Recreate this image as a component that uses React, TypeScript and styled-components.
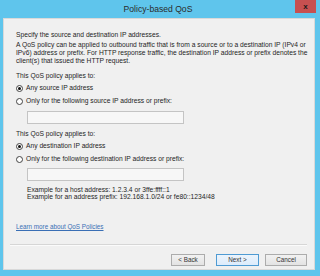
import React from 'react'
import styled, { createGlobalStyle } from 'styled-components'

const GlobalStyle = createGlobalStyle`
  html, body {
    margin: 0;
    padding: 0;
    width: 320px;
    height: 276px;
    overflow: hidden;
    background: #5fc5ec;
  }
  * { box-sizing: border-box; }
`

const Window = styled.div`
  width: 320px;
  height: 276px;
  background: #5fc5ec;
  display: flex;
  flex-direction: column;
  font-family: "Liberation Sans", Arial, sans-serif;
  color: #1e1e1e;
`

const TitleBar = styled.div`
  height: 18px;
  display: grid;
  grid-template-columns: 1fr auto 1fr;
  align-items: start;
`

const Title = styled.div`
  grid-column: 2;
  font-size: 8.6px;
  line-height: 18px;
  color: #2b2b2b;
  margin-right: 4px;
`

const CloseButton = styled.div`
  grid-column: 3;
  justify-self: end;
  width: 21px;
  height: 13px;
  margin-right: 4px;
  background: #c75050;
  display: flex;
  align-items: center;
  justify-content: center;
  font-size: 8px;
  font-weight: bold;
  color: #1a1a1a;
  line-height: 1;
`

const Client = styled.div`
  flex: 1;
  margin: 0 5px 6px 3px;
  background: #f0f0f0;
  border: 1px solid #d9d9d9;
  display: flex;
  flex-direction: column;
`

const Content = styled.div`
  padding: 12px 10px 0 12px;
  font-size: 6.7px;
  line-height: 8px;
`

const Line = styled.div<{ $mt?: number }>`
  margin-top: ${(p) => p.$mt ?? 0}px;
  white-space: nowrap;
`

const Para = styled.p`
  margin: 2px 0 0;
  line-height: 8px;
  white-space: nowrap;
`

const RadioRow = styled.label<{ $mt: number }>`
  display: flex;
  align-items: center;
  gap: 3px;
  height: 8px;
  margin-top: ${(p) => p.$mt}px;
`

const RadioDot = styled.span<{ $checked?: boolean }>`
  width: 7px;
  height: 7px;
  border-radius: 50%;
  border: 1px solid #444;
  background: #fff;
  display: flex;
  align-items: center;
  justify-content: center;
  &::after {
    content: '';
    width: 3px;
    height: 3px;
    border-radius: 50%;
    background: ${(p) => (p.$checked ? '#111' : 'transparent')};
  }
`

const AddressBox = styled.div<{ $mt: number }>`
  width: 157px;
  height: 13px;
  margin: ${(p) => p.$mt}px 0 0 11px;
  background: #f7f7f7;
  border: 1px solid #c4c4c4;
`

const Examples = styled.div`
  margin: 5px 0 0 11px;
  line-height: 7px;
`

const Link = styled.a`
  display: block;
  margin-top: 23px;
  color: #3a6fb5;
  text-decoration: underline;
  font-size: 6.3px;
  line-height: 8px;
`

const Footer = styled.div`
  margin-top: auto;
  padding: 0 7px 3px 6px;
`

const Separator = styled.div`
  height: 2px;
  border-top: 1px solid #d6d6d6;
  border-bottom: 1px solid #fbfbfb;
`

const ButtonRow = styled.div`
  display: flex;
  justify-content: flex-end;
  margin-top: 8px;
`

const Button = styled.button<{ $w: number; $primary?: boolean; $gap?: number }>`
  width: ${(p) => p.$w}px;
  height: 12px;
  margin-left: ${(p) => p.$gap ?? 0}px;
  padding: 0;
  font-family: "Liberation Sans", Arial, sans-serif;
  font-size: 6.3px;
  color: #333;
  border: 1px solid ${(p) => (p.$primary ? '#4f9bd3' : '#acacac')};
  background: ${(p) =>
    p.$primary ? 'linear-gradient(#ecf4fc, #dcecfc)' : 'linear-gradient(#f2f2f2, #e3e3e3)'};
  line-height: 10px;
`

export default function App() {
  return (
    <>
      <GlobalStyle />
      <Window>
        <TitleBar>
          <Title>Policy-based QoS</Title>
          <CloseButton>x</CloseButton>
        </TitleBar>
        <Client>
          <Content>
            <Line>Specify the source and destination IP addresses.</Line>
            <Para>
              A QoS policy can be applied to outbound traffic that is from a source or to a destination IP (IPv4 or
              <br />
              IPv6) address or prefix. For HTTP response traffic, the destination IP address or prefix denotes the
              <br />
              client(s) that issued the HTTP request.
            </Para>
            <Line $mt={7}>This QoS policy applies to:</Line>
            <RadioRow $mt={4}>
              <RadioDot $checked />
              Any source IP address
            </RadioRow>
            <RadioRow $mt={5}>
              <RadioDot />
              Only for the following source IP address or prefix:
            </RadioRow>
            <AddressBox $mt={6} />
            <Line $mt={6}>This QoS policy applies to:</Line>
            <RadioRow $mt={4}>
              <RadioDot $checked />
              Any destination IP address
            </RadioRow>
            <RadioRow $mt={5}>
              <RadioDot />
              Only for the following destination IP address or prefix:
            </RadioRow>
            <AddressBox $mt={5} />
            <Examples>
              <Line>Example for a host address: 1.2.3.4 or 3ffe:ffff::1</Line>
              <Line>Example for an address prefix: 192.168.1.0/24 or fe80::1234/48</Line>
            </Examples>
            <Link href="#">Learn more about QoS Policies</Link>
          </Content>
          <Footer>
            <Separator />
            <ButtonRow>
              <Button $w={34}>&lt; Back</Button>
              <Button $w={43} $gap={11} $primary>
                Next &gt;
              </Button>
              <Button $w={42} $gap={6}>
                Cancel
              </Button>
            </ButtonRow>
          </Footer>
        </Client>
      </Window>
    </>
  )
}
